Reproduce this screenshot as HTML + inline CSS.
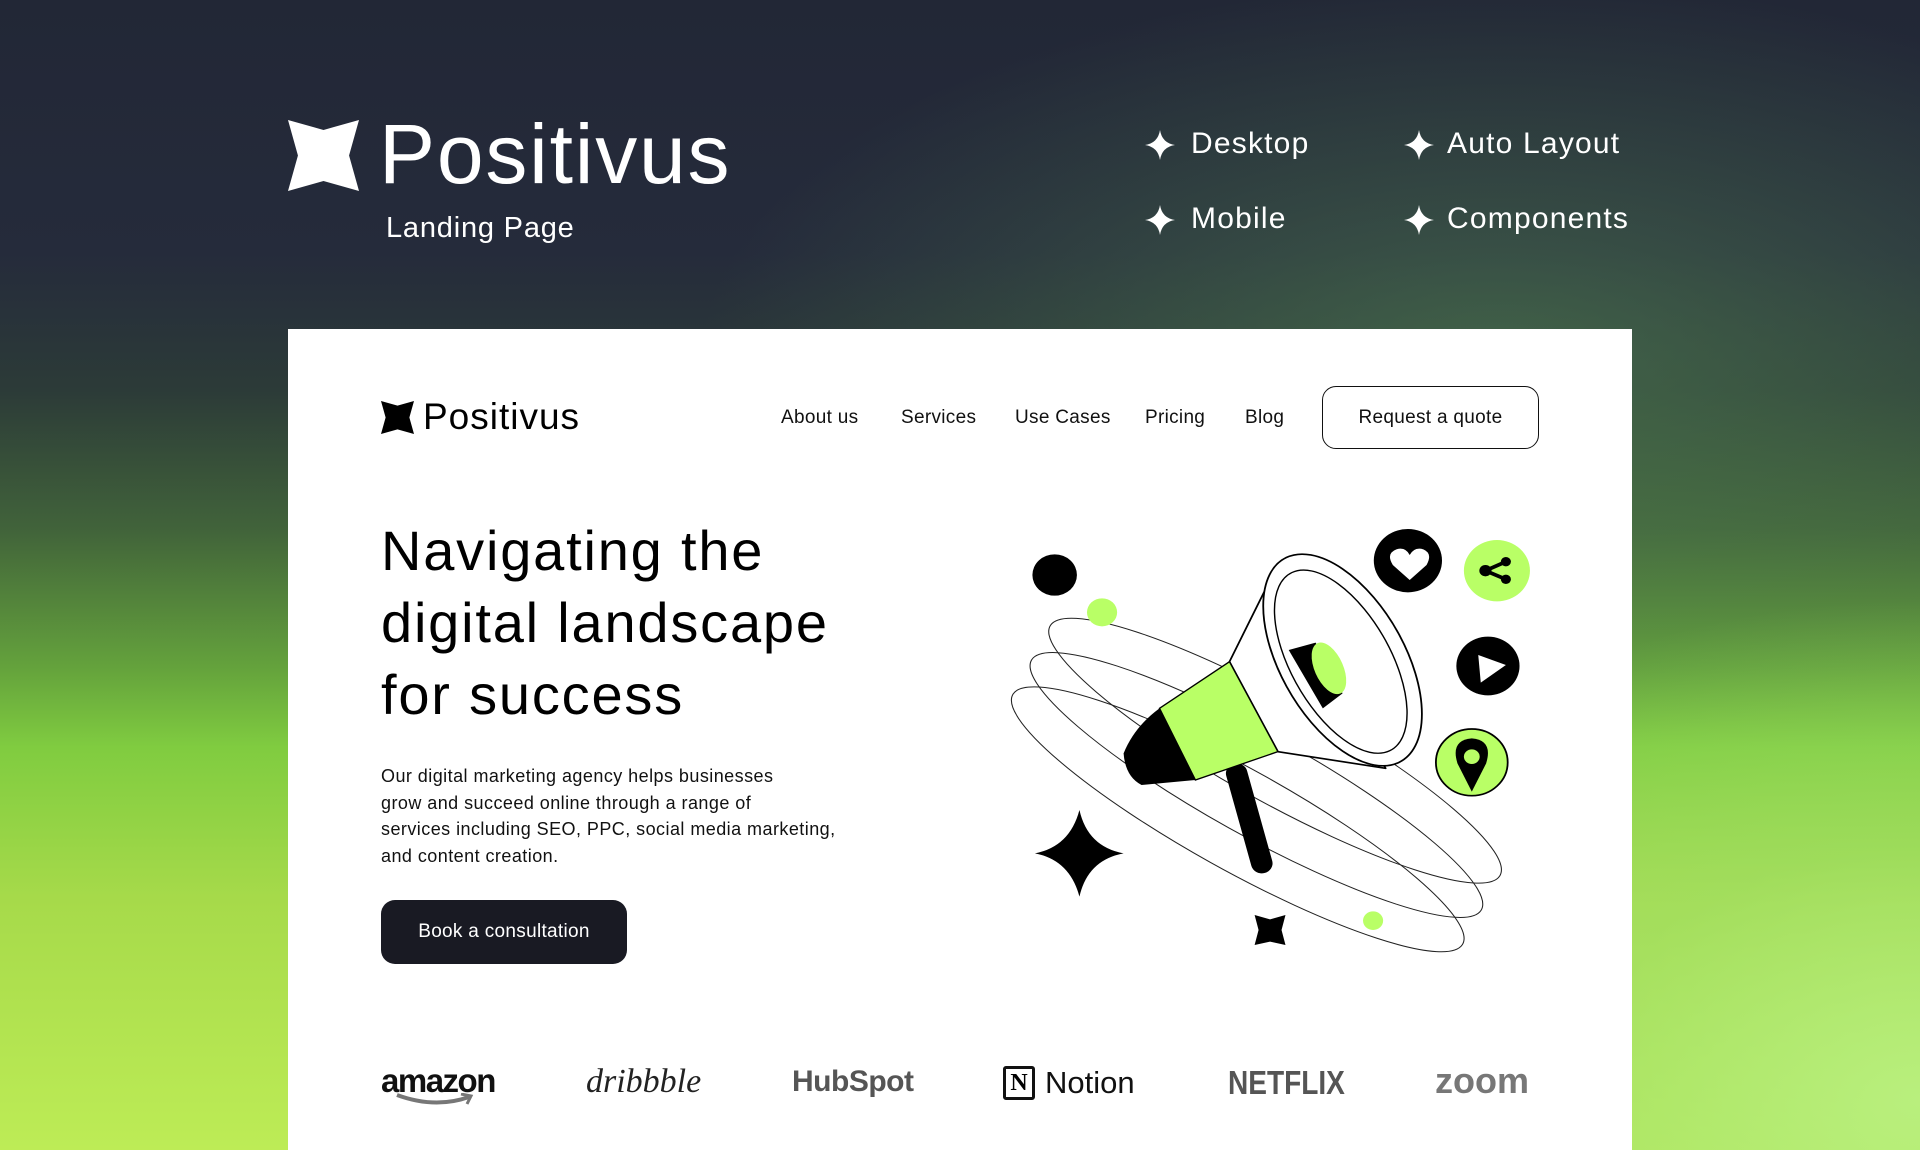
<!DOCTYPE html>
<html><head><meta charset="utf-8"><style>
*{margin:0;padding:0;box-sizing:border-box}
html,body{width:1920px;height:1150px;overflow:hidden}
body{font-family:"Liberation Sans",sans-serif;position:relative;
background:
radial-gradient(ellipse 700px 500px at 1920px 1100px,rgba(185,240,130,.9) 0%,rgba(160,225,110,.5) 50%,rgba(100,170,80,0) 100%),
radial-gradient(ellipse 800px 380px at 1500px 360px,rgba(85,135,85,.55) 0%,rgba(60,100,70,0) 100%),
linear-gradient(180deg,#222736 0%,#252b3b 22%,#2c3b38 34%,#41633a 46%,#64a23c 58%,#80cc40 65%,#a6da4a 78%,#bdec56 100%);}
.abs{position:absolute}
.w{color:#fff}
.card{position:absolute;left:288px;top:329px;width:1344px;height:821px;background:#fff}
.nav a{position:absolute;top:407px;font-size:19px;color:#111;text-decoration:none;letter-spacing:.3px}
</style></head><body>

<svg class="abs" style="left:288px;top:120px" width="71" height="71" viewBox="0 0 100 100"><path d="M0 0 L50 14 L100 0 L86 50 L100 100 L50 86 L0 100 L14 50Z" fill="#fff"/></svg>
<div class="abs w" style="left:379px;top:104px;font-size:84px;line-height:100px;letter-spacing:1.8px">Positivus</div>
<div class="abs w" style="left:386px;top:212px;font-size:29px;letter-spacing:.8px">Landing Page</div>

<svg class="abs" style="left:1145px;top:130px" width="30" height="30" viewBox="0 0 30 30"><path d="M15 0 Q17 13 30 15 Q17 17 15 30 Q13 17 0 15 Q13 13 15 0Z" fill="#fff"/></svg>
<div class="abs w" style="left:1191px;top:127px;font-size:30px;letter-spacing:1.2px">Desktop</div>
<svg class="abs" style="left:1404px;top:130px" width="30" height="30" viewBox="0 0 30 30"><path d="M15 0 Q17 13 30 15 Q17 17 15 30 Q13 17 0 15 Q13 13 15 0Z" fill="#fff"/></svg>
<div class="abs w" style="left:1447px;top:127px;font-size:30px;letter-spacing:1.2px">Auto Layout</div>
<svg class="abs" style="left:1145px;top:205px" width="30" height="30" viewBox="0 0 30 30"><path d="M15 0 Q17 13 30 15 Q17 17 15 30 Q13 17 0 15 Q13 13 15 0Z" fill="#fff"/></svg>
<div class="abs w" style="left:1191px;top:202px;font-size:30px;letter-spacing:1.2px">Mobile</div>
<svg class="abs" style="left:1404px;top:205px" width="30" height="30" viewBox="0 0 30 30"><path d="M15 0 Q17 13 30 15 Q17 17 15 30 Q13 17 0 15 Q13 13 15 0Z" fill="#fff"/></svg>
<div class="abs w" style="left:1447px;top:202px;font-size:30px;letter-spacing:1.2px">Components</div>

<div class="card"></div>
<svg class="abs" style="left:381px;top:401px" width="33" height="33" viewBox="0 0 100 100"><path d="M0 0 L50 14 L100 0 L86 50 L100 100 L50 86 L0 100 L14 50Z" fill="#000"/></svg>
<div class="abs" style="left:423px;top:396px;font-size:37px;color:#000;letter-spacing:1px">Positivus</div>
<div class="nav">
<a style="left:781px">About us</a><a style="left:901px">Services</a><a style="left:1015px">Use Cases</a><a style="left:1145px">Pricing</a><a style="left:1245px">Blog</a>
</div>
<div class="abs" style="left:1322px;top:386px;width:217px;height:63px;border:1.5px solid #111;border-radius:14px;font-size:19px;display:flex;align-items:center;justify-content:center;color:#111;letter-spacing:.3px">Request a quote</div>

<div class="abs" style="left:381px;top:515px;font-size:56px;line-height:72px;color:#000;letter-spacing:1.8px">Navigating the<br>digital landscape<br>for success</div>
<div class="abs" style="left:381px;top:763px;font-size:18px;line-height:26.5px;color:#111;width:520px;letter-spacing:.45px">Our digital marketing agency helps businesses<br>grow and succeed online through a range of<br>services including SEO, PPC, social media marketing,<br>and content creation.</div>
<div class="abs" style="left:381px;top:900px;width:246px;height:64px;background:#191a23;border-radius:14px;color:#fff;font-size:19px;display:flex;align-items:center;justify-content:center;letter-spacing:.3px">Book a consultation</div>

<svg class="abs" style="left:980px;top:500px" width="560" height="480" viewBox="0 0 1560 1440" preserveAspectRatio="none">
<g fill="none" stroke="#222" stroke-width="3">
<ellipse cx="822" cy="752" rx="730" ry="150" transform="rotate(31 822 752)"/>
<ellipse cx="770" cy="855" rx="730" ry="150" transform="rotate(31 770 855)"/>
<ellipse cx="718" cy="958" rx="730" ry="150" transform="rotate(31 718 958)"/>
</g>
<circle cx="208" cy="225" r="62"/>
<circle cx="340" cy="337" r="42" fill="#b9ff66"/>
<circle cx="1095" cy="1262" r="28" fill="#b9ff66"/>
<path d="M277 930 Q300 1040 400 1060 Q300 1080 277 1190 Q250 1080 153 1060 Q250 1040 277 930Z"/>
<path d="M765 1245 L808 1258 L851 1245 L840 1290 L851 1335 L808 1325 L765 1335 L776 1290Z"/>
<line x1="715" y1="820" x2="785" y2="1090" stroke="#000" stroke-width="60" stroke-linecap="round"/>
<path d="M815 225 L695 485 L830 755 L1130 805 Z" fill="#fff" stroke="#000" stroke-width="5" stroke-linejoin="round"/>
<path d="M695 485 L500 625 L600 840 L830 755 Z" fill="#b9ff66" stroke="#000" stroke-width="4"/>
<path d="M500 625 Q430 680 400 760 Q405 830 450 855 L600 840 Z" fill="#000"/>
<ellipse cx="1010" cy="480" rx="175" ry="345" transform="rotate(-27 1010 480)" fill="#fff" stroke="#000" stroke-width="5"/>
<ellipse cx="1005" cy="485" rx="140" ry="300" transform="rotate(-27 1005 485)" fill="none" stroke="#000" stroke-width="4"/>
<path d="M860 450 L935 428 L1010 580 L955 625 Z" fill="#000"/>
<ellipse cx="972" cy="505" rx="40" ry="82" transform="rotate(-22 972 505)" fill="#b9ff66"/>
<circle cx="1192" cy="182" r="95"/>
<path d="M1197 240 L1150 195 Q1130 160 1160 148 Q1185 140 1197 165 Q1210 140 1235 148 Q1262 160 1244 195 Z" fill="#fff"/>
<circle cx="1440" cy="212" r="92" fill="#b9ff66"/>
<g stroke="#000" stroke-width="11"><line x1="1408" y1="212" x2="1465" y2="185"/><line x1="1408" y1="212" x2="1465" y2="238"/></g>
<circle cx="1408" cy="212" r="17"/><circle cx="1465" cy="185" r="14"/><circle cx="1465" cy="238" r="14"/>
<circle cx="1415" cy="498" r="88"/>
<path d="M1388 465 L1465 495 L1395 548 Z" fill="#fff"/>
<circle cx="1370" cy="787" r="100" fill="#b9ff66" stroke="#000" stroke-width="5"/>
<path d="M1370 875 L1330 790 Q1310 720 1370 715 Q1430 720 1410 790 Z"/>
<circle cx="1370" cy="770" r="22" fill="#b9ff66"/>
</svg>

<div class="abs" style="left:381px;top:1062px;font-size:33px;font-weight:bold;color:#111;letter-spacing:-1.5px">amazon</div>
<svg class="abs" style="left:395px;top:1093px" width="80" height="14" viewBox="0 0 80 14"><path d="M2 2 Q40 16 74 4" fill="none" stroke="#777" stroke-width="4"/><path d="M66 1 L76 3 L72 11" fill="none" stroke="#777" stroke-width="3"/></svg>
<div class="abs" style="left:586px;top:1063px;font-size:34px;font-style:italic;font-family:'Liberation Serif',serif;color:#222">dribbble</div>
<div class="abs" style="left:792px;top:1065px;font-size:30px;font-weight:bold;color:#555;letter-spacing:-.5px">HubSpot</div>
<div class="abs" style="left:1003px;top:1066px;width:32px;height:34px;border:3px solid #111;border-radius:3px;font-family:'Liberation Serif',serif;font-weight:bold;font-size:24px;text-align:center;line-height:28px">N</div>
<div class="abs" style="left:1045px;top:1065px;font-size:31px;color:#111">Notion</div>
<div class="abs" style="left:1228px;top:1064px;font-size:33px;font-weight:bold;color:#555;transform:scaleX(.85);transform-origin:left">NETFLIX</div>
<div class="abs" style="left:1435px;top:1060px;font-size:36px;font-weight:bold;color:#777">zoom</div>
</body></html>
